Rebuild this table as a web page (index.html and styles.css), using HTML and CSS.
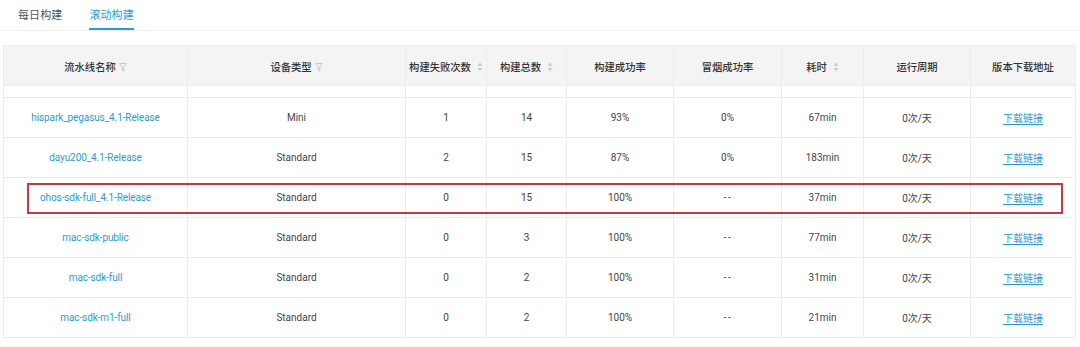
FILE: index.html
```html
<!DOCTYPE html>
<html lang="zh-CN">
<head>
<meta charset="utf-8">
<title>滚动构建</title>
<link rel="stylesheet" href="styles.css">
</head>
<body>
<div class="page">
  <nav class="tabs">
    <span class="tab">每日构建</span>
    <span class="tab active">滚动构建</span>
  </nav>

  <div class="table-wrap">
    <table class="builds">
      <colgroup>
        <col style="width:184px"><col style="width:218px"><col style="width:81px">
        <col style="width:80px"><col style="width:107px"><col style="width:108px">
        <col style="width:82px"><col style="width:107px"><col style="width:105px">
      </colgroup>
      <thead>
        <tr>
          <th>流水线名称<svg class="ico-filter" viewBox="0 0 8 9"><path d="M0.5 0.5h7L4.8 4v4L3.2 7.2V4z"/></svg></th>
          <th>设备类型<svg class="ico-filter" viewBox="0 0 8 9"><path d="M0.5 0.5h7L4.8 4v4L3.2 7.2V4z"/></svg></th>
          <th>构建失败次数<svg class="ico-sort" viewBox="0 0 6 10"><path d="M3 0.5L5.5 4h-5zM3 9.5L0.5 6h5z"/></svg></th>
          <th>构建总数<svg class="ico-sort" viewBox="0 0 6 10"><path d="M3 0.5L5.5 4h-5zM3 9.5L0.5 6h5z"/></svg></th>
          <th>构建成功率</th>
          <th>冒烟成功率</th>
          <th>耗时<svg class="ico-sort" viewBox="0 0 6 10"><path d="M3 0.5L5.5 4h-5zM3 9.5L0.5 6h5z"/></svg></th>
          <th>运行周期</th>
          <th>版本下载地址</th>
        </tr>
      </thead>
      <tbody>
        <tr class="clip"><td></td><td></td><td></td><td></td><td></td><td></td><td></td><td></td><td></td></tr>
        <tr>
          <td class="name">hispark_pegasus_4.1-Release</td><td>Mini</td><td>1</td><td>14</td><td>93%</td><td>0%</td><td>67min</td><td>0次/天</td><td><a class="dl">下载链接</a></td>
        </tr>
        <tr>
          <td class="name">dayu200_4.1-Release</td><td>Standard</td><td>2</td><td>15</td><td>87%</td><td>0%</td><td>183min</td><td>0次/天</td><td><a class="dl">下载链接</a></td>
        </tr>
        <tr>
          <td class="name">ohos-sdk-full_4.1-Release</td><td>Standard</td><td>0</td><td>15</td><td>100%</td><td class="na">--</td><td>37min</td><td>0次/天</td><td><a class="dl">下载链接</a></td>
        </tr>
        <tr>
          <td class="name">mac-sdk-public</td><td>Standard</td><td>0</td><td>3</td><td>100%</td><td class="na">--</td><td>77min</td><td>0次/天</td><td><a class="dl">下载链接</a></td>
        </tr>
        <tr>
          <td class="name">mac-sdk-full</td><td>Standard</td><td>0</td><td>2</td><td>100%</td><td class="na">--</td><td>31min</td><td>0次/天</td><td><a class="dl">下载链接</a></td>
        </tr>
        <tr>
          <td class="name">mac-sdk-m1-full</td><td>Standard</td><td>0</td><td>2</td><td>100%</td><td class="na">--</td><td>21min</td><td>0次/天</td><td><a class="dl">下载链接</a></td>
        </tr>
      </tbody>
    </table>
    <div class="highlight"></div>
  </div>
</div>
</body>
</html>
```

FILE: styles.css
```css
* { box-sizing: border-box; }

html, body {
  margin: 0;
  background: #ffffff;
}

body {
  font-family: Roboto, "Noto Sans CJK SC", sans-serif;
  color: #333333;
  -webkit-font-smoothing: antialiased;
}

.page {
  width: 1080px;
  height: 347px;
  overflow: hidden;
}

/* tab bar */
.tabs {
  display: flex;
  gap: 27px;
  height: 31px;
  padding-left: 18px;
  border-bottom: 1px solid #f0f0f0;
}

.tab {
  font-size: 11px;
  line-height: 29px;
  padding-top: 1px;
  color: #555555;
  border-bottom: 2px solid transparent;
  letter-spacing: 0.1px;
}

.tab.active {
  color: #2b9bd8;
  border-bottom-color: #2b9bd8;
}

/* table */
.table-wrap {
  position: relative;
  margin: 14px 0 0 3px;
  width: 1072px;
}

.builds {
  width: 1072px;
  table-layout: fixed;
  border-collapse: collapse;
  font-size: 10.3px;
}

.builds th,
.builds td {
  border: 1px solid #ececec;
  text-align: center;
  padding: 0;
  white-space: nowrap;
}

.builds th {
  height: 40px;
  background: #f4f4f4;
  font-weight: 500;
  color: #333333;
  padding-top: 1px;
}

.builds td {
  height: 40px;
  font-size: 10px;
  color: #444444;
}

.builds tr.clip td {
  height: 12px;
}

.builds td.name {
  color: #2b9bd0;
  letter-spacing: -0.1px;
}

.builds td.na {
  letter-spacing: 1.5px;
  padding-left: 1px;
}

.dl {
  color: #2b9bd0;
  text-decoration: underline;
  text-underline-offset: 2px;
}

.ico-filter {
  width: 8px;
  height: 9px;
  margin-left: 3px;
  vertical-align: -1px;
}

.ico-filter path {
  fill: none;
  stroke: #c4c4c4;
  stroke-width: 0.9;
  stroke-linejoin: round;
}

.ico-sort {
  width: 6px;
  height: 10px;
  margin-left: 6px;
  vertical-align: -1px;
}

.ico-sort path {
  fill: #cccccc;
}

/* marked row outline */
.highlight {
  position: absolute;
  left: 24px;
  top: 138px;
  width: 1036px;
  height: 31px;
  border: 2px solid #c9383d;
  pointer-events: none;
}
```
